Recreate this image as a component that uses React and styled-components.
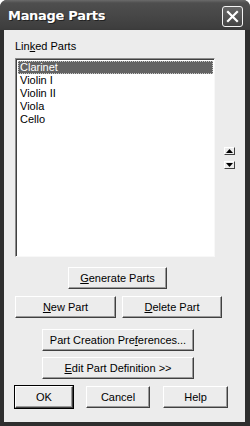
import React from "react";
import styled, { createGlobalStyle } from "styled-components";

const Global = createGlobalStyle`
  html, body { margin: 0; padding: 0; background: #ffffff; }
  body { width: 250px; height: 426px; overflow: hidden; }
`;

const Window = styled.div`
  width: 250px;
  height: 426px;
  box-sizing: border-box;
  display: flex;
  flex-direction: column;
  background: #2e2e2e;
  border-radius: 7px 7px 0 0;
  overflow: hidden;
  font-family: "Liberation Sans", Arial, sans-serif;
`;

const TitleBar = styled.div`
  height: 30px;
  flex: 0 0 30px;
  display: flex;
  align-items: center;
  justify-content: space-between;
  padding: 0 7px 0 8px;
  background: linear-gradient(#6a6a6a 0px, #4e4e4e 3px, #474747 15px, #3e3e3e 28px, #3a3a3a 30px);
`;

const Title = styled.span`
  color: #ffffff;
  font-family: "DejaVu Sans", "Liberation Sans", sans-serif;
  font-weight: bold;
  font-size: 13px;
  letter-spacing: -0.3px;
  text-shadow: 1px 1px 0 #222;
  margin-top: 1px;
`;

const CloseButton = styled.div`
  width: 19px;
  height: 19px;
  border: 1px solid #f4f4f4;
  border-radius: 3px;
  background: linear-gradient(#666, #454545);
  display: flex;
  align-items: center;
  justify-content: center;
  margin-top: 2px;
`;

const Body = styled.div`
  flex: 1;
  margin: 0 5px 4px 4px;
  background: #ececec;
  padding: 10px 0 0 11px;
  display: flex;
  flex-direction: column;
  font-size: 11px;
  color: #000;
`;

const Label = styled.div`
  height: 13px;
  line-height: 13px;
  margin-bottom: 5px;
`;

const U = styled.span`
  text-decoration: underline;
  text-underline-offset: 1px;
`;

const ListArea = styled.div`
  display: flex;
  align-items: flex-start;
`;

const ListBox = styled.div`
  width: 200px;
  height: 199px;
  box-sizing: border-box;
  background: #ffffff;
  border-top: 1px solid #8c8c8c;
  border-left: 1px solid #8c8c8c;
  border-right: 1px solid #f8f8f8;
  border-bottom: 1px solid #f8f8f8;
  box-shadow: inset 1px 1px 0 #404040;
  padding: 2px 1px 0 2px;
`;

const Item = styled.div`
  height: 13px;
  line-height: 13px;
  padding-left: 2px;
  box-sizing: border-box;
  color: ${(p) => (p.$selected ? "#ffffff" : "#000000")};
  background: ${(p) => (p.$selected ? "#636363" : "transparent")};
  outline: ${(p) => (p.$selected ? "1px dotted #c8c8c8" : "none")};
  outline-offset: -1px;
`;

const ArrowCol = styled.div`
  display: flex;
  flex-direction: column;
  gap: 6px;
  margin: 89px 0 0 9px;
`;

const ArrowBtn = styled.div`
  width: 11px;
  height: 8px;
  box-sizing: border-box;
  background: #ececec;
  border-top: 1px solid #ffffff;
  border-left: 1px solid #ffffff;
  border-right: 1px solid #404040;
  border-bottom: 1px solid #404040;
  display: flex;
  align-items: center;
  justify-content: center;
`;

const Btn = styled.div`
  box-sizing: border-box;
  width: ${(p) => p.$w}px;
  height: ${(p) => p.$h || 22}px;
  background: #ececec;
  border-top: 1px solid #ffffff;
  border-left: 1px solid #ffffff;
  border-right: 1px solid #404040;
  border-bottom: 1px solid #404040;
  box-shadow: inset -1px -1px 0 #9a9a9a;
  display: flex;
  align-items: center;
  justify-content: center;
  ${(p) => p.$default && `
    outline: 1px solid #000;
    outline-offset: 0px;
  `}
`;

const Row = styled.div`
  display: flex;
  gap: ${(p) => p.$gap || 6}px;
  margin-top: ${(p) => p.$mt}px;
  margin-left: ${(p) => p.$ml || 0}px;
`;

export default function App() {
  const items = ["Clarinet", "Violin I", "Violin II", "Viola", "Cello"];
  return (
    <>
      <Global />
      <Window>
        <TitleBar>
          <Title>Manage Parts</Title>
          <CloseButton>
            <svg width="13" height="13" viewBox="0 0 13 13">
              <path d="M2 2 L11 11 M11 2 L2 11" stroke="#fff" strokeWidth="2.2" strokeLinecap="square" />
            </svg>
          </CloseButton>
        </TitleBar>
        <Body>
          <Label>
            Lin<U>k</U>ed Parts
          </Label>
          <ListArea>
            <ListBox>
              {items.map((t, i) => (
                <Item key={t} $selected={i === 0}>
                  {t}
                </Item>
              ))}
            </ListBox>
            <ArrowCol>
              <ArrowBtn>
                <svg width="7" height="4" viewBox="0 0 7 4">
                  <path d="M3.5 0 L7 4 L0 4 Z" fill="#000" />
                </svg>
              </ArrowBtn>
              <ArrowBtn>
                <svg width="7" height="4" viewBox="0 0 7 4">
                  <path d="M0 0 L7 0 L3.5 4 Z" fill="#000" />
                </svg>
              </ArrowBtn>
            </ArrowCol>
          </ListArea>
          <Row $mt={10} $ml={53}>
            <Btn $w={99}>
              <span><U>G</U>enerate Parts</span>
            </Btn>
          </Row>
          <Row $mt={7} $gap={6}>
            <Btn $w={101}>
              <span><U>N</U>ew Part</span>
            </Btn>
            <Btn $w={100}>
              <span><U>D</U>elete Part</span>
            </Btn>
          </Row>
          <Row $mt={11} $ml={27}>
            <Btn $w={152}>
              <span>Part Creation Pre<U>f</U>erences...</span>
            </Btn>
          </Row>
          <Row $mt={6} $ml={27}>
            <Btn $w={152}>
              <span><U>E</U>dit Part Definition &gt;&gt;</span>
            </Btn>
          </Row>
          <Row $mt={7} $gap={13}>
            <Btn $w={58} $h={22} $default>
              <span>OK</span>
            </Btn>
            <Btn $w={64} $h={22}>
              <span>Cancel</span>
            </Btn>
            <Btn $w={65} $h={22}>
              <span>Help</span>
            </Btn>
          </Row>
        </Body>
      </Window>
    </>
  );
}
